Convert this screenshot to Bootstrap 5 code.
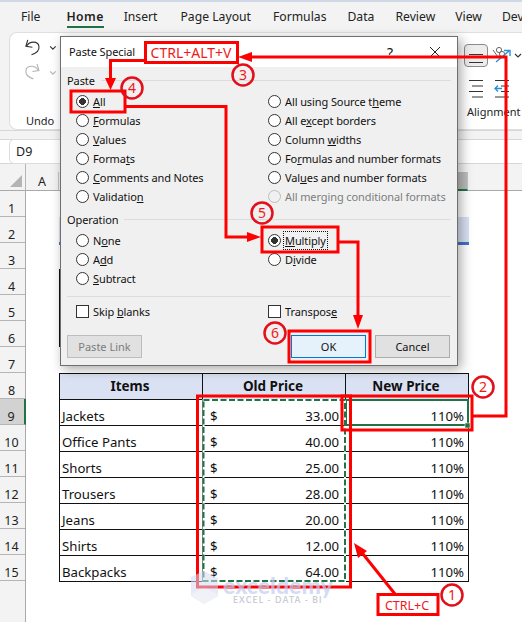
<!DOCTYPE html>
<html lang="en">
<head>
<meta charset="utf-8">
<title>Paste Special</title>
<link rel="stylesheet" href="https://cdn.jsdelivr.net/npm/bootstrap@5.3.0/dist/css/bootstrap.min.css">
<style>
html,body{margin:0;height:622px;overflow:hidden;background:#f3f3f3;}
.xl-app{position:relative;width:522px;height:622px;overflow:hidden;font-family:"Noto Sans",sans-serif;color:#222;background:#f3f3f3;}
.xl-strip{height:2px;background:#cfd8e6;}
.xl-tabs{height:30px;font-size:12.2px;line-height:30px;}
.xl-tab{position:relative;white-space:nowrap;}
.xl-tab.on{font-weight:600;color:#1f1f1f;letter-spacing:.4px;}
.xl-tab.on::after{content:"";position:absolute;left:0;right:0;top:24px;height:2px;background:#217346;}
.xl-tab1{margin-left:21px;}.xl-tab2{margin-left:26px;}.xl-tab3{margin-left:20px;}.xl-tab4{margin-left:23px;}
.xl-tab5{margin-left:22px;}.xl-tab6{margin-left:21px;}.xl-tab7{margin-left:21px;}.xl-tab8{margin-left:20px;}.xl-tab9{margin-left:20px;}
.xl-ribbon{height:98px;margin-left:9px;background:#fff;border:1px solid #dfdfdf;border-right:0;border-radius:8px 0 0 8px;font-size:11px;}
.xl-undo{width:42px;margin-left:7px;}
.xl-grouplabel{font-size:11px;line-height:16px;white-space:nowrap;}
.xl-undolabel{margin:9px 0 0 9px;}
.xl-alignlabel{margin:6px 0 0 5px;}
.xl-align{width:60px;}
.xl-toolrow{margin:11px 0 0 2px;}
.xl-iconrow{margin:11px 0 0 2px;}
.xl-tool{width:24px;height:23px;border:1px solid #8b8b8b;border-radius:4px;background:#ededed;}
.xl-sep{height:9px;border-top:1px solid #d6d6d6;}
.xl-formula{height:25px;background:#fff;border-top:1px solid #d6d6d6;border-bottom:1px solid #d6d6d6;padding-left:9px;}
.xl-namebox{width:110px;height:25px;background:#fff;border:1px solid #dcdcdc;border-radius:5px;font-size:12.5px;line-height:23px;padding-left:6px;margin-top:-1px;}
.xl-head{height:27px;}
.xl-corner{width:26px;height:27px;border-right:1px solid #b5b5b5;border-bottom:1px solid #a9a9a9;position:relative;}
.xl-corner::after{content:"";position:absolute;right:3px;bottom:3px;border-style:solid;border-width:0 0 12px 12px;border-color:transparent transparent #b4b4b4 transparent;}
.xl-cols{padding-top:8px;}
.xl-col{height:19px;border-right:1px solid #c4c4c4;border-bottom:1px solid #a9a9a9;text-align:center;font-size:12.5px;line-height:19px;}
.xl-col.a{width:33px;}.xl-col.b{width:143px;}.xl-col.c{width:143px;}
.xl-col.d{width:123px;background:#bdbdbd;border-bottom:2px solid #217346;}
.xl-col.e{flex:1;border-right:0;}
.xl-rows{width:26px;height:431px;border-right:1px solid #a9a9a9;}
.xl-rownum{height:26px;border-bottom:1px solid #b5b5b5;text-align:center;font-size:12.5px;line-height:35px;padding-right:2px;overflow:hidden;}
.xl-rownum.sel{background:#d2d2d2;border-right:2px solid #217346;margin-right:-1px;}
.xl-cells{height:431px;background:#fff;padding-left:33px;}
.xl-title{margin-top:26px;width:410px;height:28px;background:#d9e1f2;border-bottom:3px solid #4472c4;}
.xl-frag{margin-top:24px;height:78px;width:410px;border-left:1px solid #111;}
.xl-sheet{margin:26px 0 0;width:410px;table-layout:fixed;border-collapse:collapse;font-size:13.2px;color:#111;}
.xl-c1{width:143px;}.xl-c3{width:123px;}
.xl-sheet th,.xl-sheet td{height:26px;padding:0 4px 0 2px;border:1px solid #111;line-height:15px;vertical-align:bottom;}
.xl-sheet th{background:#d9e1f2;text-align:center;font-size:13.5px;font-weight:700;vertical-align:middle;}
.xl-sheet td{padding-bottom:1px;}
.xl-sheet .xl-money{padding-left:7px;padding-right:6px;}
.xl-sheet .xl-pct{text-align:right;}
.xl-dialog{position:absolute;z-index:10;left:60px;top:36px;width:398px;height:330px;background:#f0f0f0;border:1px solid #6f6f6f;box-shadow:3px 3px 11px rgba(0,0,0,.35);font-size:11px;letter-spacing:-.1px;color:#111;}
.xl-dtitle{height:30px;background:#fff;padding:0 16px 0 8px;font-size:11px;}
.xl-qmark{font-size:14px;margin-right:36px;}
.xl-heading{margin:4px 6px 2px 6px;height:19px;line-height:19px;}
.xl-heading::after{content:"";flex:1;border-top:1px solid #dcdcdc;margin:9px 0 0 6px;height:0;}
.xl-heading.second{margin-top:4px;}
.xl-opts{display:grid;grid-template-columns:192px 1fr;padding-left:15px;}
.xl-opt{height:19px;display:flex;align-items:center;gap:4px;min-height:0;padding:0;margin:0;white-space:nowrap;}
.xl-opt span{padding-top:1px;}
.xl-opt .form-check-input{margin:0;width:13px;height:13px;float:none;flex:none;background-color:#fff;border:1px solid #333;box-shadow:none;opacity:1;}
.xl-opt .form-check-input:checked{background-color:#fff;border-color:#333;background-image:radial-gradient(circle,#333 0 3.2px,transparent 3.6px);}
.xl-opt .form-check-input[type=checkbox]{border-radius:0;}
.xl-opt.off{color:#7d7d7d;}
.xl-opt.off .form-check-input{border-color:#bdbdbd;background-color:#f0f0f0;}
.xl-focus{outline:1px dotted #111;outline-offset:0;padding:1px 1px 0;margin-left:-1px;}
.xl-rule{margin:8px 6px 5px 6px;border-top:1px solid #dcdcdc;}
.xl-foot{padding:14px 7px 0 6px;}
.xl-btn{width:75px;height:23px;border-radius:0;padding:0;font-size:11px;line-height:19px;background:#e1e1e1;border:1px solid #adadad;color:#111;}
.xl-btn:disabled{background:#e1e1e1;border-color:#bdbdbd;color:#7d7d7d;opacity:1;}
.xl-btn.primaryish{background:#e5f1fb;border:1px solid #0078d7;margin-right:9px;}
.xl-marks{position:absolute;z-index:20;left:0;top:0;width:522px;height:622px;pointer-events:none;}
.xl-marks text{font-family:"Noto Sans",sans-serif;fill:#f01820;text-anchor:middle;}
.xl-water{position:absolute;z-index:30;left:190px;top:570px;width:150px;height:38px;pointer-events:none;}
.xl-waterlogo{opacity:.55;}
.xl-waterword{position:absolute;left:33px;top:0;font-family:"Lato",sans-serif;font-weight:900;font-size:23px;line-height:30px;color:rgba(196,205,240,.72);}
.xl-watersub{position:absolute;left:43px;top:24px;font-family:"Lato",sans-serif;font-weight:700;font-size:8.5px;line-height:12px;letter-spacing:1.2px;color:rgba(190,195,205,.85);white-space:nowrap;}
</style>
</head>
<body>
<div class="xl-app">
  <div class="xl-strip"></div>
  <nav class="xl-tabs d-flex">
    <span class="xl-tab xl-tab1">File</span>
    <span class="xl-tab xl-tab2 on">Home</span>
    <span class="xl-tab xl-tab3">Insert</span>
    <span class="xl-tab xl-tab4">Page Layout</span>
    <span class="xl-tab xl-tab5">Formulas</span>
    <span class="xl-tab xl-tab6">Data</span>
    <span class="xl-tab xl-tab7">Review</span>
    <span class="xl-tab xl-tab8">View</span>
    <span class="xl-tab xl-tab9">Dev</span>
  </nav>
  <div class="xl-ribbon d-flex justify-content-between">
    <div class="xl-undo d-flex flex-column align-items-start">
      <svg width="42" height="72" viewBox="0 0 42 72" class="mt-1">
        <g fill="none" stroke="#333" stroke-width="1.2">
          <path d="M10 3 L8 10 L15 11"/><path d="M8.5 10 C12 4 21 4 22 10 C22.8 15 17 18 14 19"/>
          <path d="M34 10 l3 3 3-3"/>
        </g>
        <g fill="none" stroke="#b5b5b5" stroke-width="1.2">
          <path d="M20 29 L22 36 L15 37"/><path d="M21.5 36 C18 30 9 30 8 36 C7.2 41 13 44 16 45"/>
          <path d="M34 37 l3 3 3-3"/>
        </g>
      </svg>
      <span class="xl-grouplabel xl-undolabel">Undo</span>
    </div>
    <div class="xl-align d-flex flex-column">
      <div class="xl-toolrow d-flex align-items-start">
        <div class="xl-tool d-flex flex-column justify-content-center">
          <svg width="22" height="21" viewBox="0 0 22 21"><path d="M4 9.5H18M4 17.5H18" stroke="#333" stroke-width="1.1"/></svg>
        </div>
        <svg width="34" height="23" viewBox="0 0 34 23">
          <g fill="none" stroke="#6a6a6a" stroke-width="1"><circle cx="11" cy="6" r="2.6"/><circle cx="14" cy="10" r="2.6"/><path d="M5 6 L10 13"/></g>
          <path d="M8 18 L21 7" stroke="#2b8fd6" stroke-width="1.4"/><path d="M16 6.5 H22 V12" fill="none" stroke="#2b8fd6" stroke-width="1.4"/>
          <path d="M27 10 l3 3 3-3" fill="none" stroke="#333" stroke-width="1.1"/>
        </svg>
      </div>
      <div class="xl-iconrow d-flex align-items-start">
        <svg width="58" height="20" viewBox="0 0 58 20" fill="none">
          <path d="M5 2.5H19M8 8H19M5 13.5H19M8 19H19" stroke="#333" stroke-width="1"/>
          <path d="M31 2.5H45M37 8H45M37 13.5H45M31 19H45" stroke="#333" stroke-width="1"/>
          <path d="M31 10.5H38M34 7.5l-3 3 3 3" stroke="#2b8fd6" stroke-width="1.4"/>
        </svg>
      </div>
      <span class="xl-grouplabel xl-alignlabel">Alignment</span>
    </div>
  </div>
  <div class="xl-sep"></div>
  <div class="xl-formula"><div class="xl-namebox">D9</div></div>
  <div class="xl-head d-flex">
    <div class="xl-corner"></div>
    <div class="xl-cols d-flex flex-grow-1">
      <div class="xl-col a">A</div><div class="xl-col b"></div><div class="xl-col c"></div><div class="xl-col d"></div><div class="xl-col e"></div>
    </div>
  </div>
  <div class="d-flex">
    <div class="xl-rows">
      <div class="xl-rownum">1</div><div class="xl-rownum">2</div><div class="xl-rownum">3</div><div class="xl-rownum">4</div><div class="xl-rownum">5</div>
      <div class="xl-rownum">6</div><div class="xl-rownum">7</div><div class="xl-rownum">8</div><div class="xl-rownum sel">9</div><div class="xl-rownum">10</div>
      <div class="xl-rownum">11</div><div class="xl-rownum">12</div><div class="xl-rownum">13</div><div class="xl-rownum">14</div><div class="xl-rownum">15</div>
    </div>
    <div class="xl-cells flex-grow-1">
      <div class="xl-title"></div>
      <div class="xl-frag"></div>
      <table class="xl-sheet">
        <colgroup><col class="xl-c1"><col class="xl-c1"><col class="xl-c3"></colgroup>
        <thead><tr><th>Items</th><th>Old Price</th><th>New Price</th></tr></thead>
        <tbody>
          <tr><td>Jackets</td><td class="xl-money"><div class="d-flex justify-content-between"><span>$</span><span>33.00</span></div></td><td class="xl-pct">110%</td></tr>
          <tr><td>Office Pants</td><td class="xl-money"><div class="d-flex justify-content-between"><span>$</span><span>40.00</span></div></td><td class="xl-pct">110%</td></tr>
          <tr><td>Shorts</td><td class="xl-money"><div class="d-flex justify-content-between"><span>$</span><span>25.00</span></div></td><td class="xl-pct">110%</td></tr>
          <tr><td>Trousers</td><td class="xl-money"><div class="d-flex justify-content-between"><span>$</span><span>28.00</span></div></td><td class="xl-pct">110%</td></tr>
          <tr><td>Jeans</td><td class="xl-money"><div class="d-flex justify-content-between"><span>$</span><span>20.00</span></div></td><td class="xl-pct">110%</td></tr>
          <tr><td>Shirts</td><td class="xl-money"><div class="d-flex justify-content-between"><span>$</span><span>12.00</span></div></td><td class="xl-pct">110%</td></tr>
          <tr><td>Backpacks</td><td class="xl-money"><div class="d-flex justify-content-between"><span>$</span><span>64.00</span></div></td><td class="xl-pct">110%</td></tr>
        </tbody>
      </table>
    </div>
  </div>

  <div class="xl-dialog">
    <div class="xl-dtitle d-flex align-items-center">
      <span>Paste Special</span>
      <span class="xl-qmark ms-auto">?</span>
      <svg width="12" height="12" viewBox="0 0 12 12"><path d="M1 1L11 11M11 1L1 11" stroke="#222" stroke-width="1"/></svg>
    </div>
    <div class="xl-heading d-flex">Paste</div>
    <div class="xl-opts">
      <label class="xl-opt form-check"><input class="form-check-input" type="radio" name="p" checked><span><u>A</u>ll</span></label>
      <label class="xl-opt form-check"><input class="form-check-input" type="radio" name="p"><span>All using Source t<u>h</u>eme</span></label>
      <label class="xl-opt form-check"><input class="form-check-input" type="radio" name="p"><span><u>F</u>ormulas</span></label>
      <label class="xl-opt form-check"><input class="form-check-input" type="radio" name="p"><span>All e<u>x</u>cept borders</span></label>
      <label class="xl-opt form-check"><input class="form-check-input" type="radio" name="p"><span><u>V</u>alues</span></label>
      <label class="xl-opt form-check"><input class="form-check-input" type="radio" name="p"><span>Column <u>w</u>idths</span></label>
      <label class="xl-opt form-check"><input class="form-check-input" type="radio" name="p"><span>Forma<u>t</u>s</span></label>
      <label class="xl-opt form-check"><input class="form-check-input" type="radio" name="p"><span>Fo<u>r</u>mulas and number formats</span></label>
      <label class="xl-opt form-check"><input class="form-check-input" type="radio" name="p"><span><u>C</u>omments and Notes</span></label>
      <label class="xl-opt form-check"><input class="form-check-input" type="radio" name="p"><span>Val<u>u</u>es and number formats</span></label>
      <label class="xl-opt form-check"><input class="form-check-input" type="radio" name="p"><span>Validatio<u>n</u></span></label>
      <label class="xl-opt off form-check"><input class="form-check-input" type="radio" name="p"><span>All merging conditional formats</span></label>
    </div>
    <div class="xl-heading second d-flex">Operation</div>
    <div class="xl-opts">
      <label class="xl-opt form-check"><input class="form-check-input" type="radio" name="o"><span>N<u>o</u>ne</span></label>
      <label class="xl-opt form-check"><input class="form-check-input" type="radio" name="o" checked><span class="xl-focus"><u>M</u>ultiply</span></label>
      <label class="xl-opt form-check"><input class="form-check-input" type="radio" name="o"><span>A<u>d</u>d</span></label>
      <label class="xl-opt form-check"><input class="form-check-input" type="radio" name="o"><span>D<u>i</u>vide</span></label>
      <label class="xl-opt form-check"><input class="form-check-input" type="radio" name="o"><span><u>S</u>ubtract</span></label>
    </div>
    <div class="xl-rule"></div>
    <div class="xl-opts">
      <label class="xl-opt form-check"><input class="form-check-input" type="checkbox"><span>Skip <u>b</u>lanks</span></label>
      <label class="xl-opt form-check"><input class="form-check-input" type="checkbox"><span>Transpos<u>e</u></span></label>
    </div>
    <div class="xl-foot d-flex">
      <button class="btn xl-btn me-auto" disabled>Paste Link</button>
      <button class="btn xl-btn primaryish">OK</button>
      <button class="btn xl-btn">Cancel</button>
    </div>
  </div>

  <svg class="xl-marks" viewBox="0 0 522 622">
    <rect x="346" y="400" width="122" height="25" fill="none" stroke="#217346" stroke-width="2"/>
    <rect x="465" y="423" width="5" height="5" fill="#217346" stroke="#fff" stroke-width=".5"/>
    <rect x="203.500" y="400" width="141.500" height="181" fill="none" stroke="#fff" stroke-width="2"/>
    <rect x="203.500" y="400" width="141.500" height="181" fill="none" stroke="#217346" stroke-width="2" stroke-dasharray="6 2.500"/>
    <g fill="none" stroke="#fe0000" stroke-width="3">
      <rect x="145.500" y="42.500" width="92" height="20"/>
      <rect x="71" y="91" width="54" height="21"/>
      <rect x="262" y="227" width="76" height="25"/>
      <rect x="289" y="331" width="81" height="31"/>
      <rect x="342" y="396" width="130" height="34"/>
      <rect x="197.500" y="396" width="153" height="191"/>
      <rect x="378" y="594.500" width="60" height="20"/>
      <path d="M252 57 H506 V416 H472"/>
      <path d="M145 60.500 H110.500 V80"/>
      <path d="M125 106.500 H226 V237 H250"/>
      <path d="M338 242 H358 V316"/>
      <path d="M395 594 L359 549"/>
    </g>
    <g fill="#fe0000">
      <path d="M238 57 L252 52 V62 Z"/>
      <path d="M110.500 90 L105 78 H116 Z"/>
      <path d="M261 237 L247 232 V242 Z"/>
      <path d="M358 329 L353 315 H363 Z"/>
      <path d="M354 543 L367 551 L358 558 Z"/>
    </g>
    <g fill="none" stroke="#e3101c" stroke-width="2.500">
      <circle cx="452" cy="595" r="10.500"/><circle cx="483" cy="387" r="10.500"/><circle cx="243" cy="75" r="10.500"/>
      <circle cx="132" cy="88" r="10.500"/><circle cx="262" cy="213" r="10.500"/><circle cx="275" cy="333" r="10.500"/>
    </g>
    <g font-size="14">
      <text x="452" y="600">1</text><text x="483" y="392">2</text><text x="243" y="80">3</text>
      <text x="132" y="93">4</text><text x="262" y="218">5</text><text x="275" y="338">6</text>
    </g>
    <text x="191" y="57.500" font-size="14">CTRL+ALT+V</text>
    <text x="407" y="610" font-size="12.500">CTRL+C</text>
  </svg>

  <div class="xl-water">
    <svg class="xl-waterlogo" width="30" height="36" viewBox="0 0 30 36"><path d="M1 7 L14 1 L28 8 V26 L14 34 L1 26 Z" fill="#d5dcf3"/><path d="M1 25 L14 17 L28 25 L14 34 Z" fill="#e6e8f2"/></svg>
    <span class="xl-waterword">exceldemy</span>
    <span class="xl-watersub">EXCEL - DATA - BI</span>
  </div>
</div>
<script src="https://cdn.jsdelivr.net/npm/bootstrap@5.3.0/dist/js/bootstrap.bundle.min.js"></script>
</body>
</html>
